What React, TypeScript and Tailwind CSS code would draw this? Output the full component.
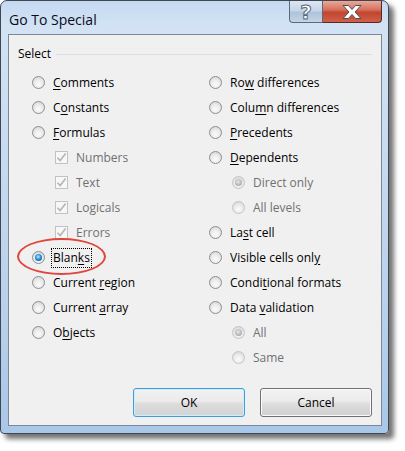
import React from "react";

const font = "font-['Open_Sans','Noto_Sans',sans-serif]";

function Radio({ checked = false, disabled = false }: { checked?: boolean; disabled?: boolean }) {
  return (
    <span
      className={`relative flex w-[13px] h-[13px] shrink-0 items-center justify-center rounded-full border ${
        disabled ? "border-[#c4c4c4]" : "border-[#8c8e90]"
      } bg-[radial-gradient(circle_at_50%_65%,#fbfbfb_0%,#eeeeee_40%,#cfd0d1_100%)]`}
    >
      {checked && !disabled && (
        <span className="block w-[7px] h-[7px] rounded-full bg-[radial-gradient(circle_at_45%_40%,#c8f0ff_0%,#39a9ec_35%,#1762b8_70%,#0b3d7e_100%)]" />
      )}
      {checked && disabled && (
        <span className="block w-[7px] h-[7px] rounded-full bg-[radial-gradient(circle_at_45%_40%,#e8e8e8_0%,#bdbdbd_50%,#9a9a9a_100%)]" />
      )}
    </span>
  );
}

function Check() {
  return (
    <span className="flex w-[13px] h-[13px] shrink-0 items-center justify-center border border-[#c2c2c2] bg-[#f7f7f7]">
      <svg width="11" height="11" viewBox="0 0 11 11">
        <path d="M1.5 5.8 L4.2 8.6 L9.6 1.6" fill="none" stroke="#b4b4b4" strokeWidth="1.6" />
      </svg>
    </span>
  );
}

function Row({
  children,
  control,
  indent = false,
  disabled = false,
}: {
  children: React.ReactNode;
  control: React.ReactNode;
  indent?: boolean;
  disabled?: boolean;
}) {
  return (
    <div className={`flex h-[25px] items-center gap-[8px] ${indent ? "pl-[23px]" : ""}`}>
      {control}
      <span className={`text-[12px] leading-[16px] whitespace-nowrap ${disabled ? "text-[#707070]" : "text-[#000000]"}`}>
        {children}
      </span>
    </div>
  );
}

const U = ({ children }: { children: React.ReactNode }) => (
  <span className="underline decoration-1 underline-offset-[2px]">{children}</span>
);

export default function App() {
  return (
    <div className={`min-h-[451px] w-[405px] bg-white ${font}`}>
      <div className="relative w-[389px] h-[434px] rounded-t-[7px] rounded-b-[4px] border border-[#3f4650] bg-[linear-gradient(180deg,#c4d9f1_0%,#d3e3f5_6%,#c9dcf1_30%,#b9d1ec_70%,#a9c7e9_100%)] shadow-[5px_5px_5px_rgba(0,0,0,0.55)]">
        {/* title bar */}
        <div className="flex h-[33px] items-start justify-between">
          <div className="pl-[8px] pt-[9px] text-[14px] leading-[20px] text-[#0b0b1a]">Go To Special</div>
          <div className="mr-[6px] flex h-[22px]">
            <div className="flex w-[34px] items-center justify-center rounded-bl-[4px] border border-t-0 border-[#5a6a7c] bg-[linear-gradient(180deg,#dbe6f2_0%,#c6d6e8_45%,#aec3da_55%,#c3d4e6_100%)]">
              <span className="text-[20px] font-bold leading-[20px] text-white [-webkit-text-stroke:1px_#5b6673] font-['DejaVu_Sans',sans-serif]">?</span>
            </div>
            <div className="flex w-[59px] items-center justify-center rounded-br-[4px] border border-l-0 border-t-0 border-[#5a2a22] bg-[linear-gradient(180deg,#e8a999_0%,#d9735f_40%,#c2452f_55%,#d0604a_100%)]">
              <svg width="24" height="16" viewBox="0 0 24 16">
                <path
                  d="M3 1.5 H8.5 L12 5.5 L15.5 1.5 H21 L15 8 L21 14.5 H15.5 L12 10.5 L8.5 14.5 H3 L9 8 Z"
                  fill="#ffffff"
                  stroke="#4e4e4e"
                  strokeWidth="1"
                  strokeLinejoin="round"
                />
              </svg>
            </div>
          </div>
        </div>
        {/* client area */}
        <div className="relative ml-[7px] w-[374px] h-[392px] border border-[#7c8896] bg-[#f0f0f0]">
          {/* group header */}
          <div className="flex items-center pl-[9px] pr-[9px] pt-[11px]">
            <span className="text-[12px] leading-[16px] text-black">Select</span>
            <div className="ml-[5px] h-px flex-1 bg-[#d5dfe5]" />
          </div>
          <div className="flex pl-[23px] pt-[8px]">
            <div className="w-[177px]">
              <Row control={<Radio />}>
                <U>C</U>omments
              </Row>
              <Row control={<Radio />}>
                C<U>o</U>nstants
              </Row>
              <Row control={<Radio />}>
                <U>F</U>ormulas
              </Row>
              <Row control={<Check />} indent disabled>
                Numbers
              </Row>
              <Row control={<Check />} indent disabled>
                Text
              </Row>
              <Row control={<Check />} indent disabled>
                Logicals
              </Row>
              <Row control={<Check />} indent disabled>
                Errors
              </Row>
              <div className="flex h-[25px] items-center gap-[6px]">
                <Radio checked />
                <span className="border border-dotted border-black px-[1px] text-[12px] leading-[18px] text-black">
                  Blan<U>k</U>s
                </span>
              </div>
              <Row control={<Radio />}>
                Current <U>r</U>egion
              </Row>
              <Row control={<Radio />}>
                Current <U>a</U>rray
              </Row>
              <Row control={<Radio />}>
                O<U>b</U>jects
              </Row>
            </div>
            <div>
              <Row control={<Radio />}>
                Ro<U>w</U> differences
              </Row>
              <Row control={<Radio />}>
                Colu<U>m</U>n differences
              </Row>
              <Row control={<Radio />}>
                <U>P</U>recedents
              </Row>
              <Row control={<Radio />}>
                <U>D</U>ependents
              </Row>
              <Row control={<Radio checked disabled />} indent disabled>
                Direct only
              </Row>
              <Row control={<Radio disabled />} indent disabled>
                All levels
              </Row>
              <Row control={<Radio />}>
                La<U>s</U>t cell
              </Row>
              <Row control={<Radio />}>
                Visible cells onl<U>y</U>
              </Row>
              <Row control={<Radio />}>
                Condi<U>t</U>ional formats
              </Row>
              <Row control={<Radio />}>
                Data <U>v</U>alidation
              </Row>
              <Row control={<Radio checked disabled />} indent disabled>
                All
              </Row>
              <Row control={<Radio disabled />} indent disabled>
                Same
              </Row>
            </div>
          </div>
          {/* buttons */}
          <div className="flex justify-end gap-[15px] pr-[9px] pt-[18px]">
            <button className="h-[29px] w-[112px] rounded-[3px] border border-[#3c9fdc] bg-[linear-gradient(180deg,#f1f1f1_0%,#ebebeb_45%,#dcdcdc_55%,#d3d3d3_100%)] text-[12px] text-black shadow-[inset_0_0_0_1px_#cdeefc]">
              OK
            </button>
            <button className="h-[29px] w-[112px] rounded-[3px] border border-[#707070] bg-[linear-gradient(180deg,#f2f2f2_0%,#ebebeb_45%,#dddddd_55%,#cfcfcf_100%)] text-[12px] text-black shadow-[inset_0_0_0_1px_#fbfbfb]">
              Cancel
            </button>
          </div>
          {/* annotation ellipse */}
          <div className="pointer-events-none absolute left-[8px] top-[203px] h-[37px] w-[89px] rounded-[50%] border-[2.5px] border-[#e0463d]" />
        </div>
      </div>
    </div>
  );
}
